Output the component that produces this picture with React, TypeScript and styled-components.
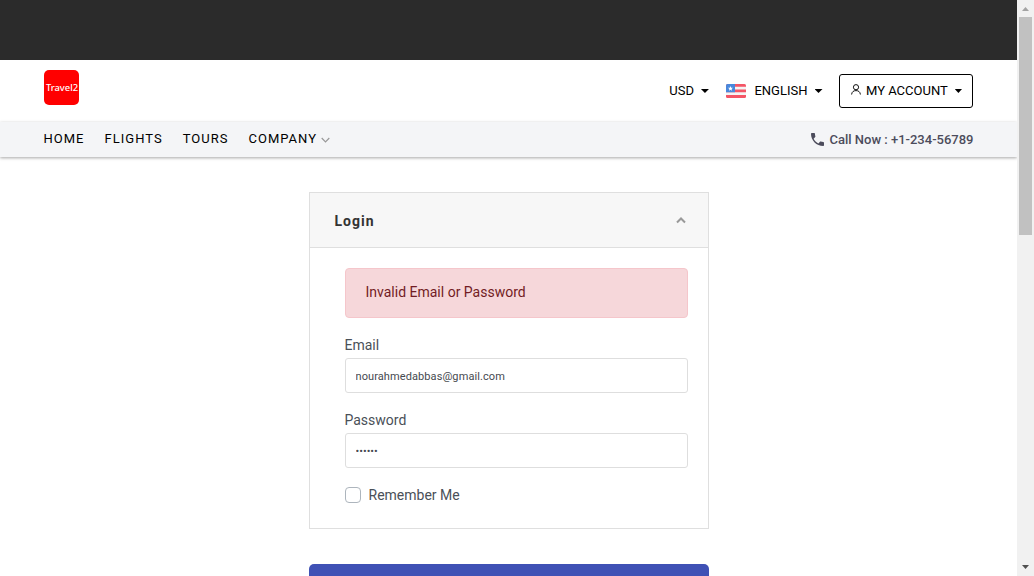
import React from "react";
import styled, { createGlobalStyle } from "styled-components";

const GlobalStyle = createGlobalStyle`
  * { box-sizing: border-box; }
  body {
    margin: 0;
    overflow: hidden;
    background: #fff;
    color: #4a5058;
    font-family: Roboto, "Liberation Sans", sans-serif;
    font-size: 14px;
  }
`;

const Window = styled.div`
  display: flex;
  height: 100vh;
  overflow: hidden;
`;

const Page = styled.div`
  flex: 1;
  min-width: 0;
  overflow: hidden;
`;

const TopBand = styled.div`
  height: 60px;
  background: #2b2b2b;
`;

const Header = styled.header`
  display: flex;
  align-items: center;
  justify-content: space-between;
  height: 62px;
  padding: 0 44px;
`;

const Logo = styled.div`
  display: flex;
  align-items: center;
  justify-content: center;
  width: 35px;
  height: 35px;
  margin-top: -7px;
  padding-left: 1px;
  border-radius: 5px;
  background: #f00;
  color: #fff;
  font: 500 9.4px/34px "Noto Sans", "Open Sans", sans-serif;
`;

const Tools = styled.div`
  display: flex;
  align-items: center;
  color: #000;
  font-size: 13px;
  line-height: 20px;
`;

const Dropdown = styled.div<{ $after: number }>`
  display: flex;
  align-items: center;
  margin-right: ${(p) => p.$after}px;
`;

const Caret = styled.span`
  width: 8px;
  height: 4px;
  margin-left: 7px;
  background: #000;
  clip-path: polygon(0 0, 100% 0, 50% 100%);
`;

const Flag = styled.svg`
  width: 20px;
  height: 14px;
  margin: -1px 8.5px 0 0;
`;

const AccountButton = styled.button`
  display: flex;
  align-items: center;
  width: 134px;
  height: 34px;
  padding: 0 10px 0 11px;
  border: 1px solid #000;
  border-radius: 3px;
  background: #fff;
  color: #000;
  font: 13px/20px Roboto, sans-serif;
  white-space: nowrap;
`;

const UserIcon = styled.svg`
  flex: none;
  width: 10px;
  height: 11px;
  margin: -3px 5px 0 0;
`;

const Nav = styled.nav`
  display: flex;
  align-items: center;
  justify-content: space-between;
  height: 35px;
  padding: 0 43.5px;
  background: #f4f5f7;
  box-shadow: 0 1px 3px rgba(0, 0, 0, 0.35);
`;

const Menu = styled.div`
  display: flex;
  gap: 20.1px;
  margin-top: -2px;
  color: #000;
  font-size: 13px;
  line-height: 20px;
  letter-spacing: 1px;
`;

const MenuItem = styled.a`
  display: flex;
  align-items: center;
`;

const MenuChevron = styled.svg`
  width: 9px;
  height: 6px;
  margin: 2px 0 0 4px;
`;

const Phone = styled.div`
  display: flex;
  align-items: center;
  gap: 5px;
  color: #4c4c5c;
  font-size: 13px;
  font-weight: 500;
`;

const PhoneIcon = styled.svg`
  width: 13px;
  height: 13px;
`;

const Content = styled.main`
  width: 400px;
  margin: 35px auto 0 309px;
`;

const Card = styled.section`
  height: 337px;
  border: 1px solid #dfdfdf;
`;

const CardHeader = styled.header`
  display: flex;
  align-items: center;
  justify-content: space-between;
  height: 55px;
  padding: 2px 22px 0 24.5px;
  border-bottom: 1px solid #dfdfdf;
  background: #f7f7f7;
`;

const CardTitle = styled.h1`
  margin: 0;
  color: #333;
  font-size: 14px;
  font-weight: 700;
  line-height: 20px;
  letter-spacing: 1px;
`;

const CollapseIcon = styled.svg`
  width: 10px;
  height: 7px;
  margin-top: -2px;
`;

const Form = styled.form`
  padding: 20px 20px 0 35px;
`;

const Alert = styled.div`
  height: 50px;
  padding-left: 19.5px;
  border: 1px solid #f5c6cb;
  border-radius: 4px;
  background: #f6d7da;
  color: #721c24;
  line-height: 47px;
`;

const Field = styled.label<{ $before: number }>`
  display: block;
  margin-top: ${(p) => p.$before}px;
  line-height: 20px;
`;

const FieldName = styled.span`
  display: block;
  margin-left: -0.5px;
`;

const Input = styled.input`
  display: block;
  width: 100%;
  height: 35px;
  margin-top: 3px;
  padding: 1px 9.5px 0;
  border: 1px solid #dedede;
  border-radius: 3px;
  outline: none;
  color: #464a50;
  font: 11px/20px Roboto, sans-serif;

  &[type="text"] {
    letter-spacing: 0.09px;
  }
`;

const Remember = styled.label`
  display: flex;
  align-items: center;
  gap: 7.5px;
  margin-top: 17px;
  line-height: 20px;
`;

const Checkbox = styled.span`
  width: 16px;
  height: 16px;
  border: 1px solid #adb5bd;
  border-radius: 4px;
`;

const Submit = styled.button`
  display: block;
  width: 100%;
  height: 50px;
  margin-top: 35px;
  border: 0;
  border-radius: 5px;
  background: #3f51b5;
`;

const Scrollbar = styled.div`
  display: flex;
  flex-direction: column;
  align-items: center;
  width: 17px;
  background: #f1f1f1;
`;

const ScrollArrow = styled.svg`
  flex: none;
  width: 17px;
  height: 17px;
`;

const Track = styled.div`
  flex: 1;
`;

const Thumb = styled.div`
  width: 13px;
  height: 218px;
  background: #c1c1c1;
`;

export default function App() {
  return (
    <>
      <GlobalStyle />
      <Window>
        <Page>
          <TopBand />
          <Header>
            <Logo>Travel2</Logo>
            <Tools>
              <Dropdown $after={17}>USD<Caret /></Dropdown>
              <Dropdown $after={16.5}>
                <Flag viewBox="0 0 20 14">
                  <clipPath id="flag"><rect width="20" height="14" rx="1.5" /></clipPath>
                  <g clipPath="url(#flag)">
                    <rect width="20" height="14" fill="#f5f5f5" />
                    <path d="M0 0h20v2.800H0zM0 5.500h20v2.800H0zM0 11h20v3H0z" fill="#f45566" />
                    <path d="M0 0h9v8.300H0z" fill="#4a88dc" />
                    <path d="M4.500 2l.7 1.700 1.800.1-1.400 1.100.5 1.800-1.600-1-1.600 1 .5-1.800L2 3.800l1.800-.1z" fill="#fff" />
                  </g>
                </Flag>
                ENGLISH<Caret />
              </Dropdown>
              <AccountButton>
                <UserIcon viewBox="0 0 10 11" fill="none" stroke="#111" strokeWidth="1">
                  <circle cx="5" cy="3.2" r="2.6" />
                  <path d="M.6 10.500C.9 7.700 2.600 6.600 5 6.600s4.100 1.100 4.400 3.900" />
                </UserIcon>
                MY ACCOUNT<Caret />
              </AccountButton>
            </Tools>
          </Header>
          <Nav>
            <Menu>
              <MenuItem>HOME</MenuItem>
              <MenuItem>FLIGHTS</MenuItem>
              <MenuItem>TOURS</MenuItem>
              <MenuItem>
                COMPANY
                <MenuChevron viewBox="0 0 9 6" fill="none" stroke="#999" strokeWidth="1.2">
                  <path d="M.7 1l3.800 3.800L8.300 1" />
                </MenuChevron>
              </MenuItem>
            </Menu>
            <Phone>
              <PhoneIcon viewBox="3 3 18 18" fill="#4c4c5c">
                <path d="M6.620 10.790c1.440 2.830 3.760 5.140 6.590 6.590l2.200-2.200c.27-.27.670-.36 1.020-.24 1.120.37 2.330.57 3.570.57.550 0 1 .45 1 1V20c0 .55-.45 1-1 1-9.390 0-17-7.610-17-17 0-.55.45-1 1-1h3.500c.55 0 1 .45 1 1 0 1.250.2 2.450.57 3.570.11.35.03.740-.25 1.020z" />
              </PhoneIcon>
              Call Now : +1-234-56789
            </Phone>
          </Nav>
          <Content>
            <Card>
              <CardHeader>
                <CardTitle>Login</CardTitle>
                <CollapseIcon viewBox="0 0 10 7" fill="none" stroke="#999" strokeWidth="2">
                  <path d="M1 5.500l4-4 4 4" />
                </CollapseIcon>
              </CardHeader>
              <Form>
                <Alert>Invalid Email or Password</Alert>
                <Field $before={17}>
                  <FieldName>Email</FieldName>
                  <Input type="text" defaultValue="nourahmedabbas@gmail.com" />
                </Field>
                <Field $before={17}>
                  <FieldName>Password</FieldName>
                  <Input type="password" defaultValue="secret" />
                </Field>
                <Remember><Checkbox />Remember Me</Remember>
              </Form>
            </Card>
            <Submit type="button" aria-label="Login" />
          </Content>
        </Page>
        <Scrollbar>
          <ScrollArrow viewBox="0 0 17 17"><path d="M5 11l3.500-4 3.500 4z" fill="#a3a3a3" /></ScrollArrow>
          <Track><Thumb /></Track>
          <ScrollArrow viewBox="0 0 17 17"><path d="M5 6l3.500 4L12 6z" fill="#505050" /></ScrollArrow>
        </Scrollbar>
      </Window>
    </>
  );
}
